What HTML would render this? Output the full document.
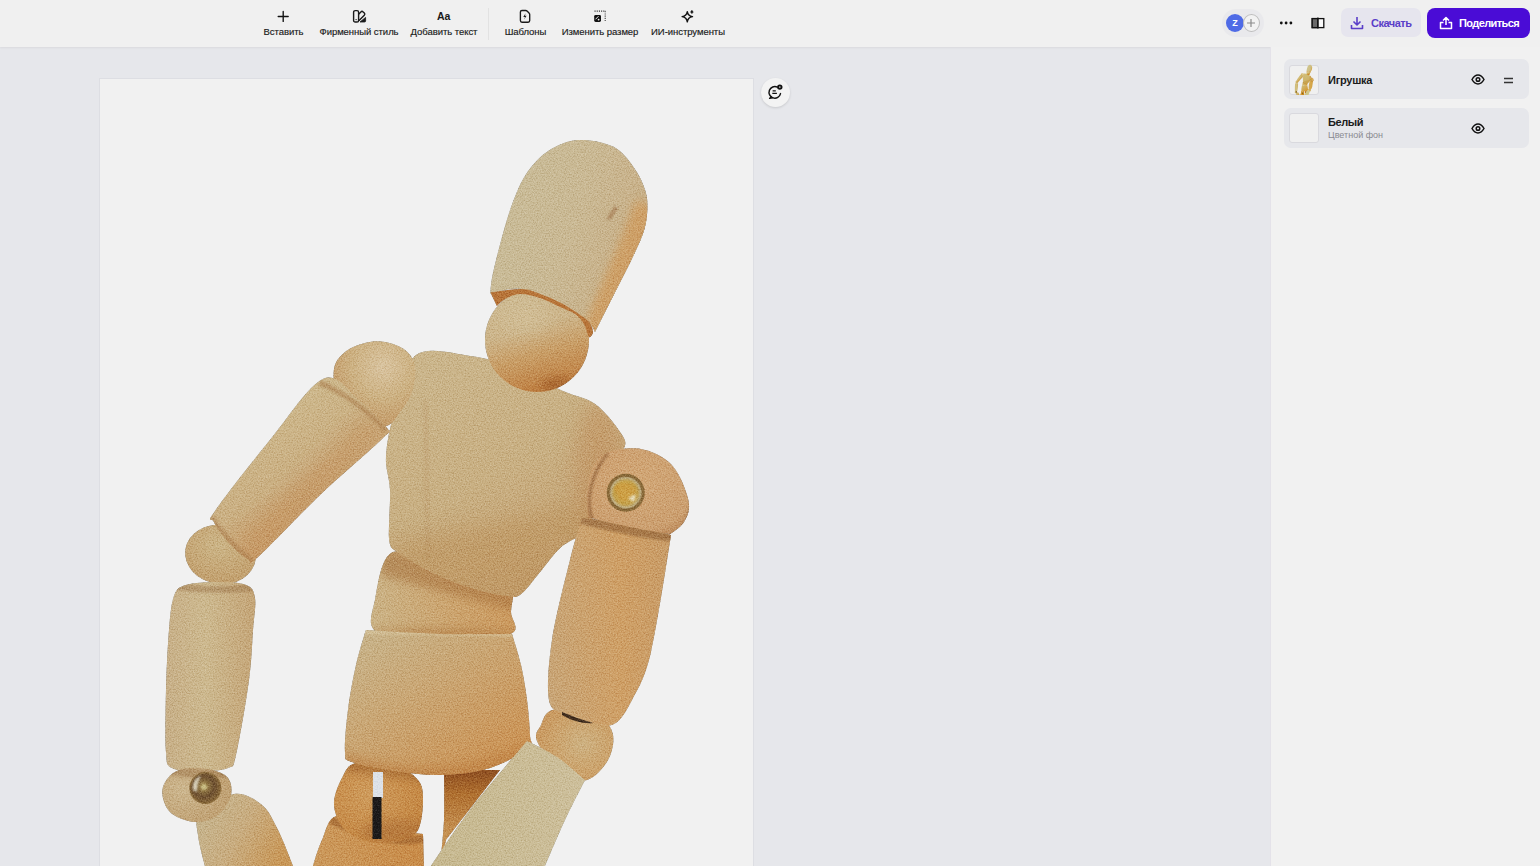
<!DOCTYPE html>
<html><head><meta charset="utf-8">
<style>
*{margin:0;padding:0;box-sizing:border-box}
html,body{width:1540px;height:866px;overflow:hidden;background:#e6e7eb;font-family:"Liberation Sans",sans-serif;position:relative}
.abs{position:absolute}
#top{left:0;top:0;width:1540px;height:47px;background:#f0f0f0;box-shadow:0 1px 2px rgba(0,0,0,0.06)}
.tl{position:absolute;top:27px;font-size:9.5px;line-height:10px;color:#1a1a1a;white-space:nowrap;transform:translateX(-50%);letter-spacing:-0.05px;-webkit-text-stroke:0.15px #1a1a1a}
.ic{position:absolute}
#panel{left:1270px;top:47px;width:270px;height:819px;background:#f1f1f1;border-left:1px solid #e4e2e9}
.card{position:absolute;left:1284px;width:245px;background:#e6e7eb;border-radius:7px}
.thumb{position:absolute;left:5px;width:30px;height:30px;border:1px solid #d9d9de;border-radius:3px;background:#f0f0f0}
#canvas{left:99px;top:78px;width:655px;height:800px;background:#f1f1f1;border:1px solid #dddee3;overflow:hidden}
</style></head><body>
<div id="top" class="abs">
  <!-- insert -->
  <svg class="ic" style="left:277px;top:10px" width="12" height="12" viewBox="0 0 12 12"><path d="M6.2 1.5v10M1.2 6.5h10" stroke="#111" stroke-width="1.35" stroke-linecap="round"/></svg>
  <div class="tl" style="left:283.5px">Вставить</div>
  <svg class="ic" style="left:352px;top:9px" width="15" height="15" viewBox="0 0 15 15"><rect x="1.6" y="1.6" width="5" height="11.4" rx="1.6" fill="none" stroke="#1a1a1a" stroke-width="1.4"/><circle cx="4.1" cy="10.6" r="0.7" fill="#1a1a1a"/><path d="M6.6 5.2 L8.9 2.9 Q10 1.8 11.1 2.9 L12.3 4.1 Q13.4 5.2 12.3 6.3 L6.8 11.8" fill="none" stroke="#1a1a1a" stroke-width="1.4" stroke-linejoin="round"/><path d="M8 13 H12.5 Q13.6 13 13.6 11.9 V8.4 Z" fill="#1a1a1a" stroke="#1a1a1a" stroke-width="0.8" stroke-linejoin="round"/></svg>
  <div class="tl" style="left:359px">Фирменный стиль</div>
  <div class="ic" style="left:437px;top:9.5px;font-size:10.5px;line-height:12px;font-weight:bold;color:#1a1a1a">Aa</div>
  <div class="tl" style="left:444px">Добавить текст</div>
  <div class="ic" style="left:488px;top:8px;width:1px;height:32px;background:#e2e2e2"></div>
  <svg class="ic" style="left:518px;top:8px" width="14" height="16" viewBox="0 0 14 16"><path d="M4 2.5 H7.6 Q8.6 2.5 9.3 3.2 L11 4.9 Q11.7 5.6 11.7 6.6 V12.6 Q11.7 14.2 10.1 14.2 H4 Q2.4 14.2 2.4 12.6 V4.1 Q2.4 2.5 4 2.5Z" fill="none" stroke="#1a1a1a" stroke-width="1.35"/><path d="M7.6 5.2 L5.3 8.9 H7 L6.1 11.4 L8.6 7.7 H6.9 Z" fill="#1a1a1a"/></svg>
  <div class="tl" style="left:525.5px">Шаблоны</div>
  <svg class="ic" style="left:592px;top:9px" width="16" height="15" viewBox="0 0 16 15"><path d="M2.5 2.1 H13.8" stroke="#333" stroke-width="1.1" stroke-dasharray="1.1 1.1"/><path d="M13.2 2.2 V12.6" stroke="#444" stroke-width="1.1" stroke-dasharray="1.1 1.1"/><rect x="2.2" y="5.9" width="6.8" height="7" rx="1.4" fill="#111"/><path d="M3.8 10 L6.2 7.5" stroke="#eee" stroke-width="1" stroke-linecap="round"/><circle cx="6.6" cy="10.6" r="0.9" fill="#eee"/></svg>
  <div class="tl" style="left:600px">Изменить размер</div>
  <svg class="ic" style="left:680px;top:9px" width="16" height="15" viewBox="0 0 16 15"><path d="M7.3 2.6 Q7.9 6.9 12.5 7.6 Q7.9 8.3 7.3 12.9 Q6.7 8.3 2.1 7.6 Q6.7 6.9 7.3 2.6Z" fill="none" stroke="#111" stroke-width="1.4" stroke-linejoin="round"/><path d="M11.9 1.3 L13.2 3.1 L11.9 4.6 L10.6 3.1Z" fill="#111" stroke="#111" stroke-width="0.6" stroke-linejoin="round"/></svg>
  <div class="tl" style="left:688px">ИИ-инструменты</div>

  <!-- right -->
  <div class="ic" style="left:1222px;top:9px;width:42px;height:28px;border-radius:14px;background:#e9e9ec"></div>
  <div class="ic" style="left:1226px;top:14px;width:18px;height:18px;border-radius:50%;background:#4f6be6;color:#fff;font-size:9px;font-weight:bold;text-align:center;line-height:18px">Z</div>
  <div class="ic" style="left:1243px;top:14px;width:17px;height:18px;border-radius:50%;background:#f2f2f2;border:1px solid #bdbdbd"></div>
  <svg class="ic" style="left:1246px;top:18px" width="10" height="10" viewBox="0 0 10 10"><path d="M5 1v8M1 5h8" stroke="#8a8a8a" stroke-width="1.2"/></svg>
  <svg class="ic" style="left:1279px;top:20px" width="14" height="6" viewBox="0 0 14 6"><circle cx="2.3" cy="3" r="1.4" fill="#111"/><circle cx="7.1" cy="3" r="1.4" fill="#111"/><circle cx="11.9" cy="3" r="1.4" fill="#111"/></svg>
  <svg class="ic" style="left:1311px;top:17px" width="14" height="12" viewBox="0 0 14 12"><rect x="1.2" y="1.6" width="11.6" height="9" fill="#fafafa" stroke="#111" stroke-width="1.3"/><rect x="1.2" y="1.6" width="5.6" height="9" fill="#6a6a6a" stroke="#111" stroke-width="1.3"/><path d="M6.9 0.6 V11.6" stroke="#111" stroke-width="1.3"/></svg>
  <div class="ic" style="left:1341px;top:8px;width:80px;height:29px;border-radius:7px;background:#e6e5ee"></div>
  <svg class="ic" style="left:1350px;top:16px" width="14" height="14" viewBox="0 0 14 14"><path d="M7 1v8M3.5 5.5l3.5 3.5 3.5-3.5M1.5 9v3.5h11v-3.5" fill="none" stroke="#5a3ec8" stroke-width="1.6" stroke-linejoin="round"/></svg>
  <div class="ic" style="left:1371px;top:17px;font-size:11px;color:#5a3ec8;font-weight:bold;letter-spacing:-0.5px">Скачать</div>
  <div class="ic" style="left:1427px;top:8px;width:103px;height:30px;border-radius:8px;background:#4a0cd6"></div>
  <svg class="ic" style="left:1439px;top:16px" width="14" height="14" viewBox="0 0 14 14"><path d="M7 9V1.5M4 4.5l3-3 3 3M4.5 6.5h-3v6h11v-6h-3" fill="none" stroke="#fff" stroke-width="1.5" stroke-linejoin="round"/></svg>
  <div class="ic" style="left:1459px;top:17px;font-size:11px;color:#fff;font-weight:bold;letter-spacing:-0.6px">Поделиться</div>
</div>

<div id="canvas" class="abs"></div>
<svg class="abs" style="left:0;top:0" width="1540" height="866" viewBox="0 0 1540 866"><defs>
<filter id="b1" x="-20%" y="-20%" width="140%" height="140%"><feGaussianBlur stdDeviation="1"/></filter>
<filter id="b3" x="-50%" y="-50%" width="200%" height="200%"><feGaussianBlur stdDeviation="4"/></filter>
<filter id="b8" x="-50%" y="-50%" width="200%" height="200%"><feGaussianBlur stdDeviation="10"/></filter>
<linearGradient id="gNeck" x1="0.1" y1="0" x2="0.4" y2="1"><stop offset="0" stop-color="#cebc94"/><stop offset="0.45" stop-color="#cdb58a"/><stop offset="0.7" stop-color="#c99e66"/><stop offset="1" stop-color="#c08244"/></linearGradient>
<radialGradient id="gBallL" cx="0.6" cy="0.3" r="0.75"><stop offset="0" stop-color="#d9c4a0"/><stop offset="0.5" stop-color="#cdb283"/><stop offset="1" stop-color="#c39865"/></radialGradient>
<radialGradient id="gElb" cx="0.45" cy="0.35" r="0.75"><stop offset="0" stop-color="#ccb587"/><stop offset="1" stop-color="#c19d6a"/></radialGradient>
<radialGradient id="gWrist" cx="0.3" cy="0.4" r="0.75"><stop offset="0" stop-color="#cdb78f"/><stop offset="1" stop-color="#bf9f70"/></radialGradient>
<radialGradient id="gBallR" cx="0.5" cy="0.4" r="0.7"><stop offset="0" stop-color="#d2a877"/><stop offset="0.8" stop-color="#cca070"/><stop offset="1" stop-color="#b98656"/></radialGradient>
<radialGradient id="gElbR" cx="0.6" cy="0.5" r="0.7"><stop offset="0" stop-color="#ceb282"/><stop offset="0.6" stop-color="#cca26a"/><stop offset="1" stop-color="#c8955a"/></radialGradient>
<linearGradient id="gHead" x1="0" y1="0" x2="1" y2="0.4"><stop offset="0" stop-color="#c9bd9a"/><stop offset="0.6" stop-color="#cab994"/><stop offset="1" stop-color="#c9b088"/></linearGradient>
<linearGradient id="gHeadR" x1="0" y1="0" x2="1" y2="0"><stop offset="0" stop-color="#d0a56c"/><stop offset="1" stop-color="#c89860"/></linearGradient>
<linearGradient id="gTorso" x1="0.2" y1="0" x2="0.7" y2="1"><stop offset="0" stop-color="#cbb68c"/><stop offset="0.5" stop-color="#c9b083"/><stop offset="1" stop-color="#c59f6e"/></linearGradient>
<linearGradient id="gPelvis" x1="0" y1="0" x2="0.9" y2="1"><stop offset="0" stop-color="#c8b68e"/><stop offset="0.45" stop-color="#caa673"/><stop offset="1" stop-color="#cc9150"/></linearGradient>
<linearGradient id="gWaist" x1="0" y1="0" x2="1" y2="0"><stop offset="0" stop-color="#cbb386"/><stop offset="0.5" stop-color="#cca671"/><stop offset="1" stop-color="#cc9a5e"/></linearGradient>
<linearGradient id="gUArmL" x1="0.3" y1="0.2" x2="0.7" y2="0.8"><stop offset="0" stop-color="#cdb88c"/><stop offset="0.5" stop-color="#cbb083"/><stop offset="1" stop-color="#c89660"/></linearGradient>
<linearGradient id="gFore" x1="0" y1="0" x2="1" y2="0"><stop offset="0" stop-color="#c8b088"/><stop offset="0.45" stop-color="#cdb98f"/><stop offset="1" stop-color="#c5a678"/></linearGradient>
<linearGradient id="gUArmR" x1="0" y1="0" x2="1" y2="0"><stop offset="0" stop-color="#c9a677"/><stop offset="0.6" stop-color="#cfa066"/><stop offset="1" stop-color="#c99d68"/></linearGradient>
<linearGradient id="gForeR" x1="0" y1="0" x2="1" y2="0"><stop offset="0" stop-color="#c7b990"/><stop offset="1" stop-color="#cdbf9b"/></linearGradient>
<linearGradient id="gThigh" x1="0" y1="0" x2="1" y2="0"><stop offset="0" stop-color="#cc9a5c"/><stop offset="1" stop-color="#c98c48"/></linearGradient>
<linearGradient id="gHand" x1="0" y1="0.2" x2="1" y2="0.6"><stop offset="0" stop-color="#c6b690"/><stop offset="0.5" stop-color="#c9ad80"/><stop offset="1" stop-color="#c99858"/></linearGradient>
<linearGradient id="gBack" x1="0" y1="0" x2="0" y2="1"><stop offset="0" stop-color="#8e4e20"/><stop offset="0.25" stop-color="#b0702f"/><stop offset="0.6" stop-color="#c48e4e"/><stop offset="1" stop-color="#c99858"/></linearGradient>
<radialGradient id="gHip" cx="0.4" cy="0.4" r="0.75"><stop offset="0" stop-color="#cf9c5c"/><stop offset="1" stop-color="#c3843e"/></radialGradient>
<radialGradient id="gScrew" cx="0.5" cy="0.5" r="0.5"><stop offset="0" stop-color="#cdb060"/><stop offset="0.7" stop-color="#c4a048"/><stop offset="0.9" stop-color="#bfae80"/><stop offset="1" stop-color="#8e7040"/></radialGradient>
<radialGradient id="gScrew2" cx="0.45" cy="0.45" r="0.6"><stop offset="0" stop-color="#a89050"/><stop offset="0.6" stop-color="#6e5030"/><stop offset="1" stop-color="#8a6a3a"/></radialGradient>
<filter id="tex" x="100" y="79" width="653" height="787" filterUnits="userSpaceOnUse" color-interpolation-filters="sRGB">
<feTurbulence type="fractalNoise" baseFrequency="0.75" numOctaves="2" seed="7" result="n"/>
<feColorMatrix in="n" type="matrix" values="0.7 0 0 0 0.15  0.7 0 0 0 0.15  0.7 0 0 0 0.15  0 0 0 0 1" result="g"/>
<feComposite in="g" in2="SourceAlpha" operator="in" result="t"/>
<feBlend in="t" in2="SourceGraphic" mode="soft-light"/>
</filter>
<clipPath id="cv"><rect x="100" y="79" width="653" height="787"/></clipPath>
<clipPath id="c1"><path d="M444.0 770.0 C444.0 770.0 500.0 770.0 500.0 770.0 C500.0 770.0 446.0 840.0 446.0 840.0 C446.0 840.0 440.0 866.0 440.0 866.0 C440.0 866.0 443.3 836.0 444.0 820.0 C444.7 804.0 444.0 770.0 444.0 770.0Z"/></clipPath><clipPath id="c2"><path d="M337.0 816.0 C346.7 814.0 365.7 825.0 380.0 828.0 C394.3 831.0 423.0 834.0 423.0 834.0 C423.0 834.0 424.0 866.0 424.0 866.0 C424.0 866.0 313.0 866.0 313.0 866.0 C313.0 866.0 318.0 848.3 322.0 840.0 C326.0 831.7 327.3 818.0 337.0 816.0Z"/></clipPath><clipPath id="c3"><path d="M334.0 805.0 C333.5 796.3 338.3 785.0 342.0 778.0 C345.7 771.0 347.2 765.0 356.0 763.0 C364.8 761.0 384.7 763.2 395.0 766.0 C405.3 768.8 413.3 774.3 418.0 780.0 C422.7 785.7 423.0 791.7 423.0 800.0 C423.0 808.3 421.8 823.2 418.0 830.0 C414.2 836.8 408.0 839.0 400.0 841.0 C392.0 843.0 379.2 843.8 370.0 842.0 C360.8 840.2 351.0 836.2 345.0 830.0 C339.0 823.8 334.5 813.7 334.0 805.0Z"/></clipPath><clipPath id="c4"><path d="M393.0 552.0 C405.5 547.0 430.8 565.3 450.0 570.0 C469.2 574.7 497.8 573.0 508.0 580.0 C518.2 587.0 510.7 603.0 511.0 612.0 C511.3 621.0 521.8 629.3 510.0 634.0 C498.2 638.7 462.2 640.3 440.0 640.0 C417.8 639.7 387.8 638.7 377.0 632.0 C366.2 625.3 372.3 613.3 375.0 600.0 C377.7 586.7 380.5 557.0 393.0 552.0Z"/></clipPath><clipPath id="c5"><path d="M366.0 630.0 C366.0 630.0 415.7 633.3 440.0 634.0 C464.3 634.7 512.0 634.0 512.0 634.0 C512.0 634.0 518.5 654.0 521.0 665.0 C523.5 676.0 525.5 688.3 527.0 700.0 C528.5 711.7 529.8 727.0 530.0 735.0 C530.2 743.0 534.7 742.5 528.0 748.0 C521.3 753.5 504.3 763.5 490.0 768.0 C475.7 772.5 457.8 774.5 442.0 775.0 C426.2 775.5 410.0 773.2 395.0 771.0 C380.0 768.8 360.3 765.2 352.0 762.0 C343.7 758.8 345.7 760.7 345.0 752.0 C344.3 743.3 346.2 724.5 348.0 710.0 C349.8 695.5 353.0 678.3 356.0 665.0 C359.0 651.7 366.0 630.0 366.0 630.0Z"/></clipPath><clipPath id="c6"><path d="M416.0 355.0 C428.5 346.0 454.2 354.0 470.0 356.0 C485.8 358.0 495.5 361.2 511.0 367.0 C526.5 372.8 549.0 384.8 563.0 391.0 C577.0 397.2 585.5 397.2 595.0 404.0 C604.5 410.8 615.2 424.7 620.0 432.0 C624.8 439.3 627.0 442.0 624.0 448.0 C621.0 454.0 607.0 459.3 602.0 468.0 C597.0 476.7 596.0 490.0 594.0 500.0 C592.0 510.0 592.7 521.8 590.0 528.0 C587.3 534.2 578.0 537.0 578.0 537.0 C578.0 537.0 566.3 542.2 560.0 548.0 C553.7 553.8 546.5 564.3 540.0 572.0 C533.5 579.7 526.5 590.0 521.0 594.0 C515.5 598.0 515.3 597.0 507.0 596.0 C498.7 595.0 484.0 592.2 471.0 588.0 C458.0 583.8 442.0 577.5 429.0 571.0 C416.0 564.5 393.0 549.0 393.0 549.0 C393.0 549.0 389.5 547.8 389.0 538.0 C388.5 528.2 390.5 503.7 390.0 490.0 C389.5 476.3 385.2 469.3 386.0 456.0 C386.8 442.7 390.0 426.8 395.0 410.0 C400.0 393.2 403.5 364.0 416.0 355.0Z"/></clipPath><clipPath id="c7"><path d="M490.5 294.0 C490.5 294.0 490.4 285.5 492.5 275.5 C494.6 265.5 499.3 246.7 502.9 233.9 C506.5 221.1 510.1 209.0 514.3 198.6 C518.4 188.2 522.1 179.6 527.8 171.6 C533.5 163.6 540.3 156.1 548.6 150.8 C556.9 145.5 567.0 140.7 577.7 140.0 C588.4 139.3 603.6 142.0 613.0 146.6 C622.4 151.2 628.4 160.1 633.8 167.4 C639.2 174.7 643.0 183.4 645.2 190.3 C647.5 197.2 647.5 202.4 647.3 209.0 C647.1 215.6 646.5 222.2 644.2 229.8 C642.0 237.4 638.3 245.0 633.8 254.7 C629.3 264.4 623.7 275.1 617.2 288.0 C610.7 300.9 595.0 332.0 595.0 332.0 C595.0 332.0 592.7 325.0 586.4 319.9 C580.1 314.8 568.4 306.4 557.3 301.2 C546.2 296.0 531.0 289.9 519.9 288.7 C508.8 287.5 490.5 294.0 490.5 294.0Z"/></clipPath><clipPath id="c8"><path d="M334.0 369.0 C335.2 361.3 339.8 356.3 345.0 352.0 C350.2 347.7 358.3 344.7 365.0 343.0 C371.7 341.3 378.3 340.8 385.0 342.0 C391.7 343.2 400.0 346.0 405.0 350.0 C410.0 354.0 413.8 359.0 415.0 366.0 C416.2 373.0 414.5 384.3 412.0 392.0 C409.5 399.7 404.3 406.3 400.0 412.0 C395.7 417.7 392.7 424.7 386.0 426.0 C379.3 427.3 368.0 424.7 360.0 420.0 C352.0 415.3 342.3 406.5 338.0 398.0 C333.7 389.5 332.8 376.7 334.0 369.0Z"/></clipPath><clipPath id="c9"><path d="M323.0 379.0 C337.7 372.2 347.3 390.8 358.0 399.0 C368.7 407.2 382.8 421.5 387.0 428.0 C391.2 434.5 394.2 426.8 383.0 438.0 C371.8 449.2 340.8 475.2 320.0 495.0 C299.2 514.8 270.0 546.3 258.0 557.0 C246.0 567.7 252.8 561.3 248.0 559.0 C243.2 556.7 234.7 549.2 229.0 543.0 C223.3 536.8 216.3 527.3 214.0 522.0 C211.7 516.7 205.7 524.7 215.0 511.0 C224.3 497.3 252.0 462.0 270.0 440.0 C288.0 418.0 308.3 385.8 323.0 379.0Z"/></clipPath><clipPath id="c10"><path d="M174.0 596.0 C176.8 588.5 178.8 587.3 186.0 585.0 C193.2 582.7 207.0 582.0 217.0 582.0 C227.0 582.0 239.7 582.3 246.0 585.0 C252.3 587.7 253.8 590.5 255.0 598.0 C256.2 605.5 254.0 616.3 253.0 630.0 C252.0 643.7 251.8 659.2 249.0 680.0 C246.2 700.8 239.5 740.3 236.0 755.0 C232.5 769.7 234.0 765.3 228.0 768.0 C222.0 770.7 209.3 771.0 200.0 771.0 C190.7 771.0 177.7 771.2 172.0 768.0 C166.3 764.8 167.0 765.0 166.0 752.0 C165.0 739.0 165.5 710.3 166.0 690.0 C166.5 669.7 167.7 645.7 169.0 630.0 C170.3 614.3 171.2 603.5 174.0 596.0Z"/></clipPath><clipPath id="c11"><path d="M200.0 815.0 C206.0 808.2 223.7 795.7 234.0 794.0 C244.3 792.3 254.7 799.0 262.0 805.0 C269.3 811.0 272.8 819.8 278.0 830.0 C283.2 840.2 293.0 866.0 293.0 866.0 C293.0 866.0 205.0 866.0 205.0 866.0 C205.0 866.0 198.8 843.5 198.0 835.0 C197.2 826.5 194.0 821.8 200.0 815.0Z"/></clipPath><clipPath id="c12"><path d="M162.4 789.8 C163.2 783.1 168.7 775.6 175.0 772.0 C181.3 768.4 191.5 767.3 200.0 768.0 C208.5 768.7 220.8 771.5 226.0 776.0 C231.2 780.5 232.3 788.5 231.0 795.0 C229.7 801.5 224.0 810.5 218.0 815.0 C212.0 819.5 203.0 822.5 195.0 822.0 C187.0 821.5 175.4 817.4 170.0 812.0 C164.6 806.6 161.6 796.5 162.4 789.8Z"/></clipPath><clipPath id="c13"><path d="M537.0 741.0 C533.8 733.2 538.8 730.0 541.0 725.0 C543.2 720.0 544.3 713.8 550.0 711.0 C555.7 708.2 566.7 707.2 575.0 708.0 C583.3 708.8 593.7 711.5 600.0 716.0 C606.3 720.5 611.7 727.7 613.0 735.0 C614.3 742.3 612.3 752.5 608.0 760.0 C603.7 767.5 595.0 778.0 587.0 780.0 C579.0 782.0 568.3 778.5 560.0 772.0 C551.7 765.5 540.2 748.8 537.0 741.0Z"/></clipPath><clipPath id="c14"><path d="M582.0 518.0 C582.0 518.0 615.2 521.2 630.0 524.0 C644.8 526.8 671.0 535.0 671.0 535.0 C671.0 535.0 657.5 624.5 651.0 652.0 C644.5 679.5 638.2 688.0 632.0 700.0 C625.8 712.0 621.0 720.3 614.0 724.0 C607.0 727.7 598.2 723.7 590.0 722.0 C581.8 720.3 571.8 717.7 565.0 714.0 C558.2 710.3 551.2 712.3 549.0 700.0 C546.8 687.7 548.5 663.3 552.0 640.0 C555.5 616.7 565.0 580.3 570.0 560.0 C575.0 539.7 582.0 518.0 582.0 518.0Z"/></clipPath><clipPath id="c15"><path d="M588.3 517.6 C588.3 517.6 586.3 503.3 587.0 495.0 C587.7 486.7 589.0 474.8 592.5 467.7 C596.0 460.6 600.6 455.7 607.7 452.5 C614.9 449.3 626.7 447.7 635.4 448.3 C644.1 448.9 653.1 452.1 660.0 456.0 C666.9 459.9 672.2 464.2 677.0 471.9 C681.8 479.6 687.6 494.0 688.8 502.4 C690.0 510.8 687.1 516.7 684.0 522.0 C680.9 527.3 670.0 534.2 670.0 534.2 C670.0 534.2 643.6 529.8 630.0 527.0 C616.4 524.2 588.3 517.6 588.3 517.6Z"/></clipPath><clipPath id="c16"><path d="M527.0 741.0 C527.0 741.0 547.3 750.5 557.0 757.0 C566.7 763.5 585.0 780.0 585.0 780.0 C585.0 780.0 571.7 805.7 565.0 820.0 C558.3 834.3 545.0 866.0 545.0 866.0 C545.0 866.0 431.0 866.0 431.0 866.0 C431.0 866.0 454.0 830.8 470.0 810.0 C486.0 789.2 527.0 741.0 527.0 741.0Z"/></clipPath></defs><g clip-path="url(#cv)"><g filter="url(#tex)"><g id="mq"><path d="M444.0 770.0 C444.0 770.0 500.0 770.0 500.0 770.0 C500.0 770.0 446.0 840.0 446.0 840.0 C446.0 840.0 440.0 866.0 440.0 866.0 C440.0 866.0 443.3 836.0 444.0 820.0 C444.7 804.0 444.0 770.0 444.0 770.0Z" fill="url(#gBack)" />
<path d="M337.0 816.0 C346.7 814.0 365.7 825.0 380.0 828.0 C394.3 831.0 423.0 834.0 423.0 834.0 C423.0 834.0 424.0 866.0 424.0 866.0 C424.0 866.0 313.0 866.0 313.0 866.0 C313.0 866.0 318.0 848.3 322.0 840.0 C326.0 831.7 327.3 818.0 337.0 816.0Z" fill="url(#gThigh)" />
<g clip-path="url(#c2)"><path d="M330 815 C370 835 400 840 425 835 L425 842 C400 848 370 842 330 824Z" fill="#9c602c" opacity="0.6" filter="url(#b1)"/></g>
<path d="M334.0 805.0 C333.5 796.3 338.3 785.0 342.0 778.0 C345.7 771.0 347.2 765.0 356.0 763.0 C364.8 761.0 384.7 763.2 395.0 766.0 C405.3 768.8 413.3 774.3 418.0 780.0 C422.7 785.7 423.0 791.7 423.0 800.0 C423.0 808.3 421.8 823.2 418.0 830.0 C414.2 836.8 408.0 839.0 400.0 841.0 C392.0 843.0 379.2 843.8 370.0 842.0 C360.8 840.2 351.0 836.2 345.0 830.0 C339.0 823.8 334.5 813.7 334.0 805.0Z" fill="url(#gHip)" />
<g clip-path="url(#c3)"><ellipse cx="400" cy="832" rx="40" ry="12" fill="#a86a35" opacity="0.45" filter="url(#b3)"/><path d="M330 755 L430 770 L430 782 L330 768Z" fill="#9a5f2c" opacity="0.55" filter="url(#b3)"/></g>
<rect x="373" y="772" width="10" height="26" fill="#dde2e8"/>
<rect x="372.5" y="797" width="9" height="42" fill="#1c1a1a"/>
<path d="M393.0 552.0 C405.5 547.0 430.8 565.3 450.0 570.0 C469.2 574.7 497.8 573.0 508.0 580.0 C518.2 587.0 510.7 603.0 511.0 612.0 C511.3 621.0 521.8 629.3 510.0 634.0 C498.2 638.7 462.2 640.3 440.0 640.0 C417.8 639.7 387.8 638.7 377.0 632.0 C366.2 625.3 372.3 613.3 375.0 600.0 C377.7 586.7 380.5 557.0 393.0 552.0Z" fill="url(#gWaist)" />
<g clip-path="url(#c4)"><path d="M380 545 L520 590 L520 612 L380 575Z" fill="#a8743f" opacity="0.55" filter="url(#b3)"/><ellipse cx="440" cy="636" rx="80" ry="8" fill="#b07a40" opacity="0.5" filter="url(#b3)"/></g>
<path d="M366.0 630.0 C366.0 630.0 415.7 633.3 440.0 634.0 C464.3 634.7 512.0 634.0 512.0 634.0 C512.0 634.0 518.5 654.0 521.0 665.0 C523.5 676.0 525.5 688.3 527.0 700.0 C528.5 711.7 529.8 727.0 530.0 735.0 C530.2 743.0 534.7 742.5 528.0 748.0 C521.3 753.5 504.3 763.5 490.0 768.0 C475.7 772.5 457.8 774.5 442.0 775.0 C426.2 775.5 410.0 773.2 395.0 771.0 C380.0 768.8 360.3 765.2 352.0 762.0 C343.7 758.8 345.7 760.7 345.0 752.0 C344.3 743.3 346.2 724.5 348.0 710.0 C349.8 695.5 353.0 678.3 356.0 665.0 C359.0 651.7 366.0 630.0 366.0 630.0Z" fill="url(#gPelvis)" />
<g clip-path="url(#c5)"><path d="M350 628 L530 632 L530 637 L350 634Z" fill="#d9c7a0" opacity="0.6" filter="url(#b1)"/><path d="M340 752 C400 770 460 778 540 738 L540 790 L340 790Z" fill="#b9793a" opacity="0.45" filter="url(#b3)"/></g>
<path d="M416.0 355.0 C428.5 346.0 454.2 354.0 470.0 356.0 C485.8 358.0 495.5 361.2 511.0 367.0 C526.5 372.8 549.0 384.8 563.0 391.0 C577.0 397.2 585.5 397.2 595.0 404.0 C604.5 410.8 615.2 424.7 620.0 432.0 C624.8 439.3 627.0 442.0 624.0 448.0 C621.0 454.0 607.0 459.3 602.0 468.0 C597.0 476.7 596.0 490.0 594.0 500.0 C592.0 510.0 592.7 521.8 590.0 528.0 C587.3 534.2 578.0 537.0 578.0 537.0 C578.0 537.0 566.3 542.2 560.0 548.0 C553.7 553.8 546.5 564.3 540.0 572.0 C533.5 579.7 526.5 590.0 521.0 594.0 C515.5 598.0 515.3 597.0 507.0 596.0 C498.7 595.0 484.0 592.2 471.0 588.0 C458.0 583.8 442.0 577.5 429.0 571.0 C416.0 564.5 393.0 549.0 393.0 549.0 C393.0 549.0 389.5 547.8 389.0 538.0 C388.5 528.2 390.5 503.7 390.0 490.0 C389.5 476.3 385.2 469.3 386.0 456.0 C386.8 442.7 390.0 426.8 395.0 410.0 C400.0 393.2 403.5 364.0 416.0 355.0Z" fill="url(#gTorso)" />
<g clip-path="url(#c6)"><path d="M390 545 C450 530 520 520 600 500 L600 620 L380 620Z" fill="#bd955f" opacity="0.55" filter="url(#b8)"/><ellipse cx="600" cy="470" rx="25" ry="70" fill="#c29360" opacity="0.6" filter="url(#b8)"/><path d="M423 400 L428 400 L430 560 L425 560Z" fill="#b89060" opacity="0.18" filter="url(#b1)"/></g>
<clipPath id="cneck"><circle cx="537" cy="340" r="52"/></clipPath>
<circle cx="537" cy="340" r="52" fill="url(#gNeck)"/>
<g clip-path="url(#cneck)"><ellipse cx="557" cy="386" rx="16" ry="9" fill="#a3602c" opacity="0.7" filter="url(#b3)"/><ellipse cx="525" cy="318" rx="25" ry="14" fill="#d6c6a2" opacity="0.5" filter="url(#b8)"/></g>
<path d="M490.5 294.0 C490.5 294.0 490.4 285.5 492.5 275.5 C494.6 265.5 499.3 246.7 502.9 233.9 C506.5 221.1 510.1 209.0 514.3 198.6 C518.4 188.2 522.1 179.6 527.8 171.6 C533.5 163.6 540.3 156.1 548.6 150.8 C556.9 145.5 567.0 140.7 577.7 140.0 C588.4 139.3 603.6 142.0 613.0 146.6 C622.4 151.2 628.4 160.1 633.8 167.4 C639.2 174.7 643.0 183.4 645.2 190.3 C647.5 197.2 647.5 202.4 647.3 209.0 C647.1 215.6 646.5 222.2 644.2 229.8 C642.0 237.4 638.3 245.0 633.8 254.7 C629.3 264.4 623.7 275.1 617.2 288.0 C610.7 300.9 595.0 332.0 595.0 332.0 C595.0 332.0 592.7 325.0 586.4 319.9 C580.1 314.8 568.4 306.4 557.3 301.2 C546.2 296.0 531.0 289.9 519.9 288.7 C508.8 287.5 490.5 294.0 490.5 294.0Z" fill="url(#gHead)" />
<g clip-path="url(#c7)"><path d="M636 200 L668 212 L618 348 L580 337 C594 300 618 250 636 200Z" fill="#cf9e62" opacity="0.85" filter="url(#b3)"/><path d="M615 206 L618 208 L610 220 L607 218Z" fill="#9a6a40" opacity="0.6" filter="url(#b1)"/></g>
<path d="M490.5 292.5 C490.5 292.5 513.4 288.8 521.6 289.0 C529.9 289.2 533.1 291.5 540.0 294.0 C546.9 296.5 555.0 299.5 563.0 304.0 C571.0 308.5 583.0 316.2 588.0 321.0 C593.0 325.8 593.0 333.0 593.0 333.0 C593.0 333.0 590.5 338.5 589.0 337.0 C587.5 335.5 586.3 327.8 584.0 324.0 C581.7 320.2 579.0 316.8 575.0 314.0 C571.0 311.2 565.8 309.7 560.0 307.0 C554.2 304.3 546.7 300.2 540.0 298.0 C533.3 295.8 525.8 293.8 520.0 294.0 C514.2 294.2 508.8 297.0 505.0 299.0 C501.2 301.0 497.0 306.0 497.0 306.0 C497.0 306.0 490.5 292.5 490.5 292.5Z" fill="#b87538"/>
<path d="M334.0 369.0 C335.2 361.3 339.8 356.3 345.0 352.0 C350.2 347.7 358.3 344.7 365.0 343.0 C371.7 341.3 378.3 340.8 385.0 342.0 C391.7 343.2 400.0 346.0 405.0 350.0 C410.0 354.0 413.8 359.0 415.0 366.0 C416.2 373.0 414.5 384.3 412.0 392.0 C409.5 399.7 404.3 406.3 400.0 412.0 C395.7 417.7 392.7 424.7 386.0 426.0 C379.3 427.3 368.0 424.7 360.0 420.0 C352.0 415.3 342.3 406.5 338.0 398.0 C333.7 389.5 332.8 376.7 334.0 369.0Z" fill="url(#gBallL)" />
<ellipse cx="220.5" cy="554.5" rx="35.5" ry="29.5" transform="rotate(8 220.5 554.5)" fill="url(#gElb)"/>
<path d="M323.0 379.0 C337.7 372.2 347.3 390.8 358.0 399.0 C368.7 407.2 382.8 421.5 387.0 428.0 C391.2 434.5 394.2 426.8 383.0 438.0 C371.8 449.2 340.8 475.2 320.0 495.0 C299.2 514.8 270.0 546.3 258.0 557.0 C246.0 567.7 252.8 561.3 248.0 559.0 C243.2 556.7 234.7 549.2 229.0 543.0 C223.3 536.8 216.3 527.3 214.0 522.0 C211.7 516.7 205.7 524.7 215.0 511.0 C224.3 497.3 252.0 462.0 270.0 440.0 C288.0 418.0 308.3 385.8 323.0 379.0Z" fill="url(#gUArmL)" />
<g clip-path="url(#c9)"><path d="M386 428 L254 558 L240 540 L370 410Z" fill="#c38f58" opacity="0.5" filter="url(#b8)"/><path d="M321 380 C340 388 365 405 387 428 L384 432 C365 410 340 394 318 385Z" fill="#a87a48" opacity="0.5" filter="url(#b1)"/><path d="M213 515 C222 530 238 548 254 559 L250 563 C235 552 218 535 210 520Z" fill="#a87a48" opacity="0.5" filter="url(#b1)"/></g>
<path d="M174.0 596.0 C176.8 588.5 178.8 587.3 186.0 585.0 C193.2 582.7 207.0 582.0 217.0 582.0 C227.0 582.0 239.7 582.3 246.0 585.0 C252.3 587.7 253.8 590.5 255.0 598.0 C256.2 605.5 254.0 616.3 253.0 630.0 C252.0 643.7 251.8 659.2 249.0 680.0 C246.2 700.8 239.5 740.3 236.0 755.0 C232.5 769.7 234.0 765.3 228.0 768.0 C222.0 770.7 209.3 771.0 200.0 771.0 C190.7 771.0 177.7 771.2 172.0 768.0 C166.3 764.8 167.0 765.0 166.0 752.0 C165.0 739.0 165.5 710.3 166.0 690.0 C166.5 669.7 167.7 645.7 169.0 630.0 C170.3 614.3 171.2 603.5 174.0 596.0Z" fill="url(#gFore)" />
<g clip-path="url(#c10)"><path d="M165 580 C200 588 230 588 260 582 L260 590 C230 594 200 594 165 588Z" fill="#9c7448" opacity="0.45" filter="url(#b1)"/></g>
<path d="M200.0 815.0 C206.0 808.2 223.7 795.7 234.0 794.0 C244.3 792.3 254.7 799.0 262.0 805.0 C269.3 811.0 272.8 819.8 278.0 830.0 C283.2 840.2 293.0 866.0 293.0 866.0 C293.0 866.0 205.0 866.0 205.0 866.0 C205.0 866.0 198.8 843.5 198.0 835.0 C197.2 826.5 194.0 821.8 200.0 815.0Z" fill="url(#gHand)" />
<path d="M162.4 789.8 C163.2 783.1 168.7 775.6 175.0 772.0 C181.3 768.4 191.5 767.3 200.0 768.0 C208.5 768.7 220.8 771.5 226.0 776.0 C231.2 780.5 232.3 788.5 231.0 795.0 C229.7 801.5 224.0 810.5 218.0 815.0 C212.0 819.5 203.0 822.5 195.0 822.0 C187.0 821.5 175.4 817.4 170.0 812.0 C164.6 806.6 161.6 796.5 162.4 789.8Z" fill="url(#gWrist)" />
<g clip-path="url(#c12)"><path d="M160 762 C190 772 215 772 240 766 L240 775 C215 780 190 780 160 772Z" fill="#9c7448" opacity="0.45" filter="url(#b1)"/></g>
<circle cx="205.3" cy="788" r="16" fill="#8a6a3a"/>
<circle cx="205.3" cy="788" r="14.5" fill="url(#gScrew2)"/>
<path d="M193 790 C192 782 196 777 201 776 C198 781 197 786 197 792Z" fill="#e8e4d0" opacity="0.85" filter="url(#b1)"/>
<circle cx="204" cy="787" r="3" fill="#d8d098" opacity="0.8" filter="url(#b1)"/>
<path d="M537.0 741.0 C533.8 733.2 538.8 730.0 541.0 725.0 C543.2 720.0 544.3 713.8 550.0 711.0 C555.7 708.2 566.7 707.2 575.0 708.0 C583.3 708.8 593.7 711.5 600.0 716.0 C606.3 720.5 611.7 727.7 613.0 735.0 C614.3 742.3 612.3 752.5 608.0 760.0 C603.7 767.5 595.0 778.0 587.0 780.0 C579.0 782.0 568.3 778.5 560.0 772.0 C551.7 765.5 540.2 748.8 537.0 741.0Z" fill="url(#gElbR)" />
<path d="M582.0 518.0 C582.0 518.0 615.2 521.2 630.0 524.0 C644.8 526.8 671.0 535.0 671.0 535.0 C671.0 535.0 657.5 624.5 651.0 652.0 C644.5 679.5 638.2 688.0 632.0 700.0 C625.8 712.0 621.0 720.3 614.0 724.0 C607.0 727.7 598.2 723.7 590.0 722.0 C581.8 720.3 571.8 717.7 565.0 714.0 C558.2 710.3 551.2 712.3 549.0 700.0 C546.8 687.7 548.5 663.3 552.0 640.0 C555.5 616.7 565.0 580.3 570.0 560.0 C575.0 539.7 582.0 518.0 582.0 518.0Z" fill="url(#gUArmR)" />
<g clip-path="url(#c14)"><path d="M575 512 C610 522 650 530 680 534 L680 542 C650 540 610 532 575 522Z" fill="#8a5c30" opacity="0.55" filter="url(#b1)"/></g>
<path d="M562 712 C572 716 582 720 593 723 C584 724 572 721 562 715Z" fill="#2a1a10" opacity="0.85"/>
<path d="M588.3 517.6 C588.3 517.6 586.3 503.3 587.0 495.0 C587.7 486.7 589.0 474.8 592.5 467.7 C596.0 460.6 600.6 455.7 607.7 452.5 C614.9 449.3 626.7 447.7 635.4 448.3 C644.1 448.9 653.1 452.1 660.0 456.0 C666.9 459.9 672.2 464.2 677.0 471.9 C681.8 479.6 687.6 494.0 688.8 502.4 C690.0 510.8 687.1 516.7 684.0 522.0 C680.9 527.3 670.0 534.2 670.0 534.2 C670.0 534.2 643.6 529.8 630.0 527.0 C616.4 524.2 588.3 517.6 588.3 517.6Z" fill="url(#gBallR)" />
<g clip-path="url(#c15)"><path d="M690 490 C690 520 680 535 668 538 C630 532 600 525 585 518 L585 528 L700 545 L700 490Z" fill="#8f6236" opacity="0.55" filter="url(#b1)"/><path d="M592 520 C586 500 590 475 608 453" fill="none" stroke="#8a5a30" stroke-width="3" opacity="0.6" filter="url(#b1)"/></g>
<circle cx="625.7" cy="492.7" r="19" fill="#8a6a38"/>
<circle cx="625.7" cy="492.7" r="16.5" fill="url(#gScrew)"/>
<path d="M614 488 C620 480 632 482 636 490 C634 498 626 503 620 500Z" fill="#d09a38" opacity="0.6" filter="url(#b1)"/>
<path d="M628 498 L636 494 L634 502Z" fill="#f2f0e0" opacity="0.8" filter="url(#b1)"/>
<path d="M527.0 741.0 C527.0 741.0 547.3 750.5 557.0 757.0 C566.7 763.5 585.0 780.0 585.0 780.0 C585.0 780.0 571.7 805.7 565.0 820.0 C558.3 834.3 545.0 866.0 545.0 866.0 C545.0 866.0 431.0 866.0 431.0 866.0 C431.0 866.0 454.0 830.8 470.0 810.0 C486.0 789.2 527.0 741.0 527.0 741.0Z" fill="url(#gForeR)" /></g></g></g></svg>
<div style="display:none">
</div>

<div class="abs" style="left:760.5px;top:78px;width:29px;height:29px;border-radius:50%;background:#f3f3f3;box-shadow:0 1px 2.5px rgba(0,0,0,0.13)"></div>
<svg class="abs" style="left:766px;top:83px" width="18" height="18" viewBox="0 0 18 18"><path d="M11.3 4.1 A5.8 5.8 0 1 0 14.5 10.6" fill="none" stroke="#111" stroke-width="1.45" stroke-linecap="round"/><path d="M5.2 13.6 L3.6 15.4 L6.6 14.7" fill="none" stroke="#111" stroke-width="1.4" stroke-linejoin="round" stroke-linecap="round"/><path d="M6.6 7.9 H9.8 M6.3 10.4 H10.9" stroke="#111" stroke-width="1.3"/><circle cx="13.8" cy="4.1" r="2.7" fill="#111"/><path d="M13.8 3.3 v1.6 M13 4.1 h1.6" stroke="#f3f3f3" stroke-width="0.6"/></svg>

<div id="panel" class="abs"></div>
<div class="card" style="top:59px;height:40px">
  <div class="thumb" style="top:5.5px"></div>
  <div class="abs" style="left:44px;top:15px;font-size:11px;font-weight:bold;color:#1c1c1c;letter-spacing:-0.25px">Игрушка</div>
  <svg class="abs" style="left:187px;top:15px" width="14" height="11" viewBox="0 0 14 11"><path d="M1 5.5C3 2 5 1 7 1s4 1 6 4.5C11 9 9 10 7 10S3 9 1 5.5z" fill="none" stroke="#111" stroke-width="1.5"/><circle cx="7" cy="5.5" r="1.8" fill="none" stroke="#111" stroke-width="1.5"/></svg>
  <svg class="abs" style="left:219px;top:18px" width="11" height="7" viewBox="0 0 11 7"><path d="M1 1.5h9M1 5.5h9" stroke="#333" stroke-width="1.5"/></svg>
</div>
<div class="card" style="top:108px;height:40px">
  <div class="thumb" style="top:5px"></div>
  <div class="abs" style="left:44px;top:8px;font-size:11px;font-weight:bold;color:#1c1c1c;letter-spacing:-0.4px">Белый</div>
  <div class="abs" style="left:44px;top:22px;font-size:9px;color:#8a8a90">Цветной фон</div>
  <svg class="abs" style="left:187px;top:15px" width="14" height="11" viewBox="0 0 14 11"><path d="M1 5.5C3 2 5 1 7 1s4 1 6 4.5C11 9 9 10 7 10S3 9 1 5.5z" fill="none" stroke="#111" stroke-width="1.5"/><circle cx="7" cy="5.5" r="1.8" fill="none" stroke="#111" stroke-width="1.5"/></svg>
</div>
<svg class="abs" style="left:1289px;top:64px;filter:saturate(1.3) hue-rotate(8deg) contrast(1.1)" width="31" height="31" viewBox="1289 64 31 31"><use href="#mq" transform="translate(1288.9 58.8) scale(0.036 0.042)"/></svg>
</body></html>
